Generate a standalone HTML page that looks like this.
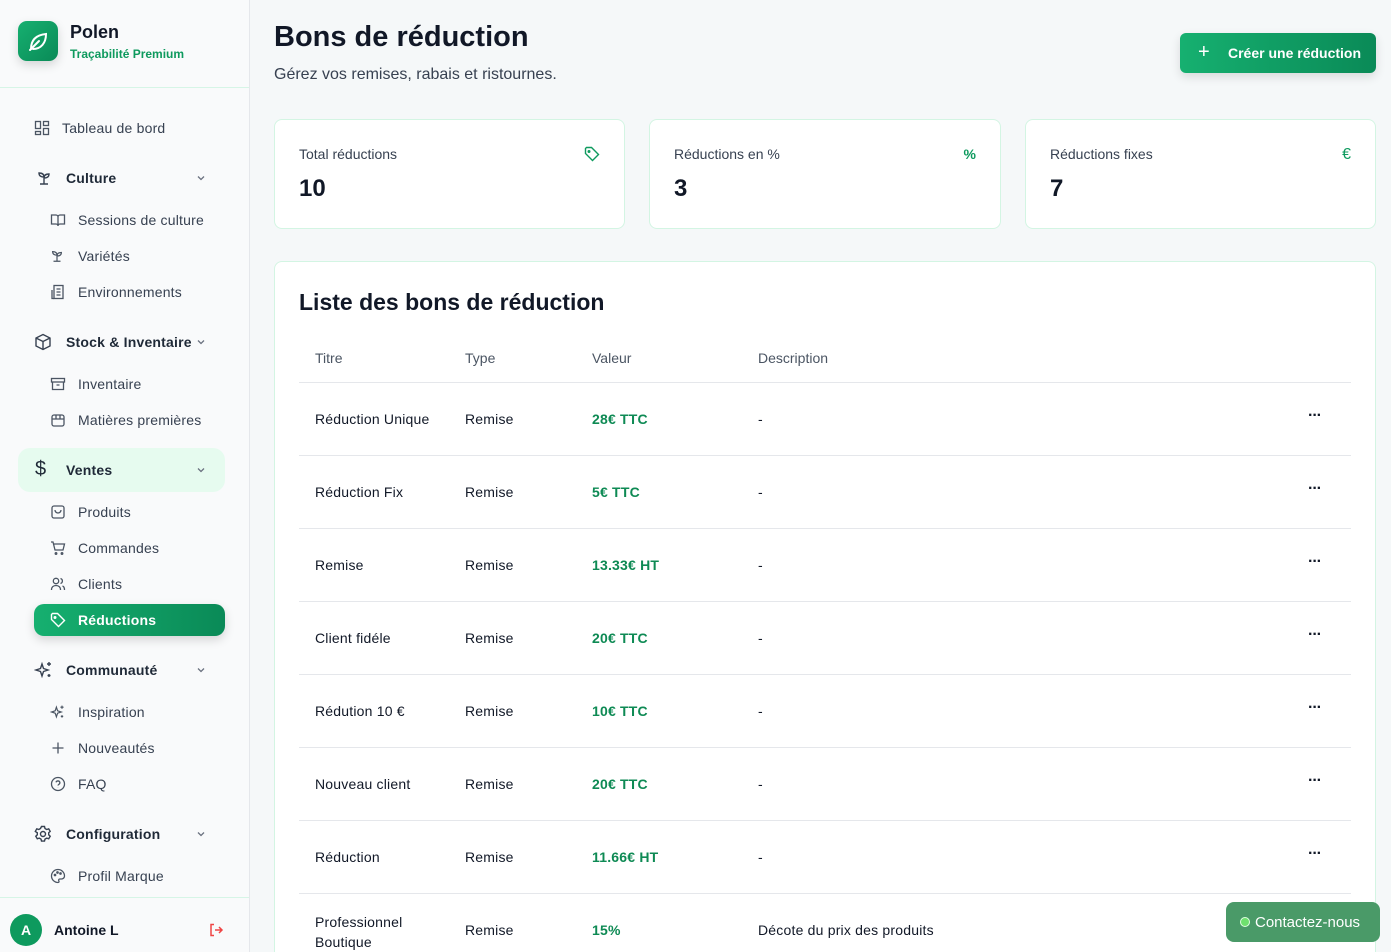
<!DOCTYPE html>
<html><head><meta charset="utf-8"><style>
*{box-sizing:border-box;margin:0;padding:0}
html{width:1391px;height:952px;overflow:hidden}
body{width:1391px;height:952px;overflow:hidden;background:#f5f8f9;font-family:"Liberation Sans",sans-serif;color:#1f2937;position:relative}
.sb{position:absolute;left:0;top:0;width:250px;height:952px;background:#f9fafb;border-right:1px solid #e5e7eb}
.logo{position:absolute;left:18px;top:21px;width:40px;height:40px;border-radius:9px;background:linear-gradient(135deg,#16b070,#0a8a57);box-shadow:0 4px 10px rgba(0,0,0,.15)}
.brand{position:absolute;left:70px;top:22px;font-size:18px;font-weight:bold;color:#111827}
.tag{position:absolute;left:70px;top:47px;font-size:12px;color:#0e9a5e;font-weight:bold}
.hr{position:absolute;left:0;width:249px;height:1px;background:#d6f5e6}
.it{position:absolute;font-size:14px;color:#374151;display:flex;align-items:center;letter-spacing:.2px}
.it svg{position:absolute;left:-28px}
.grp{font-weight:bold;color:#1f2937}
.chev{position:absolute;left:195px;width:12px;height:12px}
h1{position:absolute;left:274px;top:21px;font-size:29px;font-weight:bold;color:#111827}
.sub{position:absolute;left:274px;top:66px;font-size:16px;color:#374151}
.btn{position:absolute;left:1180px;top:33px;width:196px;height:40px;border-radius:6px;background:linear-gradient(90deg,#16b070,#0a8a57);color:#fff;font-size:14px;font-weight:bold;box-shadow:0 4px 10px rgba(0,0,0,.12)}
.card{position:absolute;background:#fff;border:1px solid #d3f5e3;border-radius:8px}
.st .l{position:absolute;left:24px;top:26px;font-size:14px;color:#374151}
.st .v{position:absolute;left:24px;top:55px;font-size:24px;font-weight:bold;color:#111827}
.st .i{position:absolute;right:24px;top:26px;color:#0e9a5e;font-size:16px}
.row{position:absolute;left:299px;width:1052px;height:73px;border-top:1px solid #e5e7eb;font-size:14px;color:#111827;letter-spacing:.2px}
.row span{position:absolute;top:28px}
.c1{left:16px}.c2{left:166px}.c3{left:293px;color:#0e8a54;font-weight:bold}.c4{left:459px}
.dots{left:1009px;font-weight:bold;font-size:16px;top:24px!important;letter-spacing:-1px}
.th{position:absolute;top:350px;font-size:14px;color:#4b5563}
</style></head><body>
<div class="sb">
<div class="logo"><svg width="40" height="40" viewBox="0 0 40 40" fill="none" stroke="#fff" stroke-width="2" stroke-linecap="round"><path d="M13 28c0-9 5-14 15-15 0 9-5 15-13 15"/><path d="M12 29l9-9"/></svg></div>
<div class="brand">Polen</div><div class="tag">Traçabilité Premium</div>
<div class="hr" style="top:87px"></div>
<div class="it" style="left:62px;top:120px"><svg width="16" height="16" viewBox="0 0 16 16" fill="none" stroke="#4b5563" stroke-width="1.3" style="left:-28px"><rect x="1.5" y="1.5" width="5" height="7"/><rect x="9.5" y="1.5" width="5" height="4"/><rect x="9.5" y="8.5" width="5" height="6"/><rect x="1.5" y="11.5" width="5" height="3"/></svg>Tableau de bord</div>
<div class="it grp" style="left:66px;top:170px"><svg width="16" height="16" viewBox="0 0 16 16" fill="none" stroke="#374151" stroke-width="1.4" style="left:-30px"><path d="M4 14h8M8 14V7M8 7C8 4 6 3 3 3c0 3 2 4 5 4zM8 8c0-3 2-4 5-4 0 3-2 4-5 4"/></svg>Culture</div>
<div class="it" style="left:78px;top:212px"><svg width="16" height="16" viewBox="0 0 16 16" fill="none" stroke="#4b5563" stroke-width="1.3"><path d="M1.5 3h4.5a2 2 0 012 2v9a2 2 0 00-2-2H1.5zM14.5 3H10a2 2 0 00-2 2v9a2 2 0 012-2h4.5z"/></svg>Sessions de culture</div>
<div class="it" style="left:78px;top:248px"><svg width="14" height="14" viewBox="0 0 16 16" fill="none" stroke="#4b5563" stroke-width="1.4"><path d="M4 14h8M8 14V7M8 7C8 4 6 3 3 3c0 3 2 4 5 4zM8 8c0-3 2-4 5-4 0 3-2 4-5 4"/></svg>Variétés</div>
<div class="it" style="left:78px;top:284px"><svg width="16" height="16" viewBox="0 0 16 16" fill="none" stroke="#4b5563" stroke-width="1.3"><rect x="4" y="1.5" width="9" height="13"/><path d="M2 6v8.5h2M6.5 5h4M6.5 8h4M6.5 11h4"/></svg>Environnements</div>
<div class="it grp" style="left:66px;top:334px"><svg width="18" height="18" viewBox="0 0 18 18" fill="none" stroke="#374151" stroke-width="1.4" style="left:-32px"><path d="M9 1.5l7 3.5v8l-7 3.5-7-3.5V5zM2 5l7 3.5L16 5M9 8.5v8"/></svg>Stock &amp; Inventaire</div>
<div class="it" style="left:78px;top:376px"><svg width="16" height="16" viewBox="0 0 16 16" fill="none" stroke="#4b5563" stroke-width="1.3"><rect x="1.5" y="2.5" width="13" height="3.5"/><path d="M2.5 6v7.5h11V6M6.5 9h3"/></svg>Inventaire</div>
<div class="it" style="left:78px;top:412px"><svg width="16" height="16" viewBox="0 0 16 16" fill="none" stroke="#4b5563" stroke-width="1.3"><rect x="2" y="3" width="12" height="11" rx="2"/><path d="M2 7h12M6 3v4M10 3v4"/></svg>Matières premières</div>
<div style="position:absolute;left:18px;top:448px;width:207px;height:44px;border-radius:12px;background:#e6fbef"></div>
<div class="it grp" style="left:66px;top:462px"><span style="position:absolute;left:-31px;top:-4px;font-size:20px;font-weight:normal">$</span>Ventes</div>
<div class="it" style="left:78px;top:504px"><svg width="16" height="16" viewBox="0 0 16 16" fill="none" stroke="#4b5563" stroke-width="1.3"><rect x="2" y="2" width="12" height="12" rx="2"/><path d="M5 6a3 3 0 006 0"/></svg>Produits</div>
<div class="it" style="left:78px;top:540px"><svg width="16" height="16" viewBox="0 0 16 16" fill="none" stroke="#4b5563" stroke-width="1.3"><path d="M1 2h2l2 8h8l1.5-6H4"/><circle cx="6" cy="13.5" r=".8"/><circle cx="12" cy="13.5" r=".8"/></svg>Commandes</div>
<div class="it" style="left:78px;top:576px"><svg width="16" height="16" viewBox="0 0 16 16" fill="none" stroke="#4b5563" stroke-width="1.3"><circle cx="6" cy="5" r="2.7"/><path d="M1.5 14c0-3 2-4.5 4.5-4.5s4.5 1.5 4.5 4.5M10.5 2.5a2.6 2.6 0 010 5M12.5 10c1.5.5 2 2 2 4"/></svg>Clients</div>
<div style="position:absolute;left:34px;top:604px;width:191px;height:32px;border-radius:10px;background:linear-gradient(90deg,#16b070,#0a8a57);box-shadow:0 4px 10px rgba(0,0,0,.15)"></div>
<div class="it" style="left:78px;top:612px;color:#fff;font-weight:bold"><svg width="16" height="16" viewBox="0 0 16 16" fill="none" stroke="#fff" stroke-width="1.4"><path d="M1.5 2.5v5l7 7 6-6-7-7h-5z"/><circle cx="5" cy="5.5" r=".8"/></svg>Réductions</div>
<div class="it grp" style="left:66px;top:662px"><svg width="20" height="20" viewBox="0 0 20 20" fill="none" stroke="#374151" stroke-width="1.4" style="left:-32px"><path d="M8 4l1.5 4.5L14 10l-4.5 1.5L8 16l-1.5-4.5L2 10l4.5-1.5zM15 2v4M13 4h4M15 14v3M13.5 15.5h3"/></svg>Communauté</div>
<div class="it" style="left:78px;top:704px"><svg width="16" height="16" viewBox="0 0 20 20" fill="none" stroke="#4b5563" stroke-width="1.5"><path d="M8 4l1.5 4.5L14 10l-4.5 1.5L8 16l-1.5-4.5L2 10l4.5-1.5zM15 2v4M13 4h4M15 14v3M13.5 15.5h3"/></svg>Inspiration</div>
<div class="it" style="left:78px;top:740px"><svg width="16" height="16" viewBox="0 0 16 16" fill="none" stroke="#4b5563" stroke-width="1.3"><path d="M8 2.5v11M2.5 8h11"/></svg>Nouveautés</div>
<div class="it" style="left:78px;top:776px"><svg width="16" height="16" viewBox="0 0 16 16" fill="none" stroke="#4b5563" stroke-width="1.3"><circle cx="8" cy="8" r="6.5"/><path d="M6 6.3a2 2 0 013.9.6c0 1.3-1.9 1.6-1.9 2.6M8 11.5v.1"/></svg>FAQ</div>
<div class="it grp" style="left:66px;top:826px"><svg width="18" height="18" viewBox="0 0 18 18" fill="none" stroke="#374151" stroke-width="1.4" style="left:-32px"><circle cx="9" cy="9" r="2.5"/><path d="M7.5 1.5h3l.5 2 1.7 1 2-.7 1.5 2.6-1.5 1.4v2l1.5 1.4-1.5 2.6-2-.7-1.7 1-.5 2h-3l-.5-2-1.7-1-2 .7-1.5-2.6 1.5-1.4v-2L1.3 6.4l1.5-2.6 2 .7 1.7-1z"/></svg>Configuration</div>
<div class="it" style="left:78px;top:868px"><svg width="16" height="16" viewBox="0 0 16 16" fill="none" stroke="#4b5563" stroke-width="1.3"><path d="M8 1.5a6.5 6.5 0 100 13c1 0 1.3-.8.8-1.6-.5-.9 0-1.9 1-1.9h1.7a3 3 0 003-3c0-3.6-2.9-6.5-6.5-6.5z"/><circle cx="5" cy="7" r=".7"/><circle cx="7.5" cy="4.5" r=".7"/><circle cx="10.5" cy="5.5" r=".7"/></svg>Profil Marque</div>
<svg class="chev" style="top:172px" viewBox="0 0 12 12" fill="none" stroke="#6b7280" stroke-width="1.3"><path d="M3 4.5l3 3 3-3"/></svg>
<svg class="chev" style="top:336px" viewBox="0 0 12 12" fill="none" stroke="#6b7280" stroke-width="1.3"><path d="M3 4.5l3 3 3-3"/></svg>
<svg class="chev" style="top:464px" viewBox="0 0 12 12" fill="none" stroke="#6b7280" stroke-width="1.3"><path d="M3 4.5l3 3 3-3"/></svg>
<svg class="chev" style="top:664px" viewBox="0 0 12 12" fill="none" stroke="#6b7280" stroke-width="1.3"><path d="M3 4.5l3 3 3-3"/></svg>
<svg class="chev" style="top:828px" viewBox="0 0 12 12" fill="none" stroke="#6b7280" stroke-width="1.3"><path d="M3 4.5l3 3 3-3"/></svg>
<div class="hr" style="top:897px"></div>
<div style="position:absolute;left:10px;top:914px;width:32px;height:32px;border-radius:50%;background:#0e9a5e;color:#fff;font-weight:bold;font-size:14px;text-align:center;line-height:32px">A</div>
<div style="position:absolute;left:54px;top:922px;font-size:14px;font-weight:bold;color:#111827">Antoine L</div>
<svg style="position:absolute;left:208px;top:922px" width="16" height="16" viewBox="0 0 16 16" fill="none" stroke="#ef4444" stroke-width="1.5"><path d="M6 2.5H3v11h3M7 8h7M11 5l3 3-3 3"/></svg>
</div>
<h1>Bons de réduction</h1>
<div class="sub">Gérez vos remises, rabais et ristournes.</div>
<div class="btn"><span style="position:absolute;left:18px;top:8px;font-size:20px;font-weight:normal">+</span><span style="position:absolute;left:48px;top:12px">Créer une réduction</span></div>
<div class="card st" style="left:274px;top:119px;width:351px;height:110px"><div class="l">Total réductions</div><div class="v">10</div><svg class="i" style="right:24px" width="16" height="16" viewBox="0 0 16 16" fill="none" stroke="#0e9a5e" stroke-width="1.4"><path d="M1.5 2.5v5l7 7 6-6-7-7h-5z"/><circle cx="5" cy="5.5" r=".8"/></svg></div>
<div class="card st" style="left:649px;top:119px;width:352px;height:110px"><div class="l">Réductions en %</div><div class="v">3</div><div class="i" style="font-size:14px;font-weight:bold">%</div></div>
<div class="card st" style="left:1025px;top:119px;width:351px;height:110px"><div class="l">Réductions fixes</div><div class="v">7</div><div class="i">€</div></div>
<div class="card" style="left:274px;top:261px;width:1102px;height:700px"></div>
<div style="position:absolute;left:299px;top:289px;font-size:23px;font-weight:bold;color:#111827">Liste des bons de réduction</div>
<div class="th" style="left:315px">Titre</div><div class="th" style="left:465px">Type</div><div class="th" style="left:592px">Valeur</div><div class="th" style="left:758px">Description</div>
<div class="row" style="top:382px"><span class="c1">Réduction Unique</span><span class="c2">Remise</span><span class="c3">28€ TTC</span><span class="c4">-</span><span class="dots">···</span></div>
<div class="row" style="top:455px"><span class="c1">Réduction Fix</span><span class="c2">Remise</span><span class="c3">5€ TTC</span><span class="c4">-</span><span class="dots">···</span></div>
<div class="row" style="top:528px"><span class="c1">Remise</span><span class="c2">Remise</span><span class="c3">13.33€ HT</span><span class="c4">-</span><span class="dots">···</span></div>
<div class="row" style="top:601px"><span class="c1">Client fidéle</span><span class="c2">Remise</span><span class="c3">20€ TTC</span><span class="c4">-</span><span class="dots">···</span></div>
<div class="row" style="top:674px"><span class="c1">Rédution 10 €</span><span class="c2">Remise</span><span class="c3">10€ TTC</span><span class="c4">-</span><span class="dots">···</span></div>
<div class="row" style="top:747px"><span class="c1">Nouveau client</span><span class="c2">Remise</span><span class="c3">20€ TTC</span><span class="c4">-</span><span class="dots">···</span></div>
<div class="row" style="top:820px"><span class="c1">Réduction</span><span class="c2">Remise</span><span class="c3">11.66€ HT</span><span class="c4">-</span><span class="dots">···</span></div>
<div class="row" style="top:893px"><span class="c1" style="top:18px;line-height:20px">Professionnel<br>Boutique</span><span class="c2" style="top:28px">Remise</span><span class="c3">15%</span><span class="c4">Décote du prix des produits</span></div>
<div style="position:absolute;left:1226px;top:902px;width:154px;height:40px;border-radius:8px;background:#4a9a68;color:#fff;font-size:15px"><span style="position:absolute;left:14px;top:15px;width:10px;height:10px;border-radius:50%;background:#6ee06e;border:1.5px solid #dfffe0"></span><span style="position:absolute;left:29px;top:12px">Contactez-nous</span></div>
</body></html>
